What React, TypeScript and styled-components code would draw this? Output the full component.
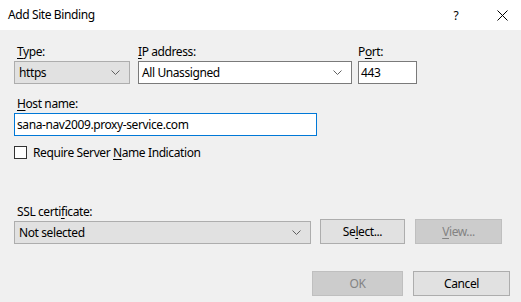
import React from 'react';
import styled, { createGlobalStyle } from 'styled-components';

const GlobalStyle = createGlobalStyle`
  html, body {
    margin: 0;
    padding: 0;
    background: #f0f0f0;
  }
  body {
    font-family: "Noto Sans", "Open Sans", sans-serif;
    font-size: 12px;
    letter-spacing: -0.4px;
    color: #000;
  }
`;

const Window = styled.div`
  width: 521px;
  height: 302px;
  display: flex;
  flex-direction: column;
  background: #f0f0f0;
  overflow: hidden;
`;

const TitleBar = styled.div`
  height: 30px;
  flex: none;
  display: flex;
  align-items: center;
  background: #fff;
  padding-left: 8px;
`;

const Title = styled.div`
  flex: 1;
  font-size: 12px;
  margin-top: -1px;
`;

const CaptionButton = styled.div<{ $w: number; $pl?: number }>`
  box-sizing: border-box;
  width: ${(p) => p.$w}px;
  height: 30px;
  display: flex;
  align-items: center;
  justify-content: center;
  padding-left: ${(p) => p.$pl ?? 0}px;
  font-size: 12px;
`;

const Body = styled.div`
  flex: 1;
  display: flex;
  flex-direction: column;
  padding: 14px 0 0 14px;
`;

const Row = styled.div<{ $gap?: number; $mt?: number }>`
  display: flex;
  align-items: flex-end;
  gap: ${(p) => p.$gap ?? 8}px;
  margin-top: ${(p) => p.$mt ?? 0}px;
`;

const Field = styled.div<{ $w: number }>`
  width: ${(p) => p.$w}px;
  display: flex;
  flex-direction: column;
`;

const Label = styled.label<{ $pad?: number }>`
  display: block;
  line-height: 16px;
  padding-left: ${(p) => p.$pad ?? 3}px;
  margin-bottom: 1px;
  white-space: nowrap;
`;

const Key = styled.span`
  text-decoration: underline;
  text-underline-offset: 2px;
`;

const Combo = styled.div<{ $editable?: boolean }>`
  box-sizing: border-box;
  height: 23px;
  display: flex;
  align-items: center;
  padding: 0 9px 0 ${(p) => (p.$editable ? 3 : 4)}px;
  background: ${(p) => (p.$editable ? '#fff' : '#e1e1e1')};
  border: 1px solid ${(p) => (p.$editable ? '#7a7a7a' : '#adadad')};
  white-space: nowrap;
`;

const ComboText = styled.span`
  flex: 1;
`;

const TextBox = styled.div<{ $focused?: boolean }>`
  box-sizing: border-box;
  height: 23px;
  display: flex;
  align-items: center;
  padding: 0 2px;
  background: #fff;
  border: 1px solid ${(p) => (p.$focused ? '#0078d7' : '#7a7a7a')};
  white-space: nowrap;
`;

const CheckRow = styled.div`
  display: flex;
  align-items: center;
  gap: 6px;
  margin-top: 8px;
`;

const CheckBox = styled.div`
  box-sizing: border-box;
  width: 13px;
  height: 13px;
  background: #fff;
  border: 1px solid #333;
`;

const Button = styled.div<{ $w: number; $disabled?: boolean }>`
  box-sizing: border-box;
  width: ${(p) => p.$w}px;
  height: 25px;
  display: flex;
  align-items: center;
  justify-content: center;
  background: ${(p) => (p.$disabled ? '#cccccc' : '#e1e1e1')};
  border: 1px solid ${(p) => (p.$disabled ? '#bfbfbf' : '#adadad')};
  color: ${(p) => (p.$disabled ? '#838383' : '#000')};
`;

const Footer = styled.div`
  display: flex;
  justify-content: flex-end;
  gap: 10px;
  margin-top: 27px;
  padding-right: 11px;
`;

const Chevron = () => (
  <svg width="9" height="5" viewBox="0 0 9 5" fill="none">
    <path d="M0.5 0.5 L4.5 4.5 L8.5 0.5" stroke="#606060" strokeWidth="1" />
  </svg>
);

const CloseIcon = () => (
  <svg width="11" height="11" viewBox="0 0 11 11" fill="none">
    <path d="M0.5 0.5 L10.5 10.5 M10.5 0.5 L0.5 10.5" stroke="#000" strokeWidth="1" />
  </svg>
);

export default function App() {
  return (
    <Window>
      <GlobalStyle />
      <TitleBar>
        <Title>Add Site Binding</Title>
        <CaptionButton $w={46}>?</CaptionButton>
        <CaptionButton $w={42} $pl={4}>
          <CloseIcon />
        </CaptionButton>
      </TitleBar>
      <Body>
        <Row>
          <Field $w={116}>
            <Label>
              <Key>T</Key>ype:
            </Label>
            <Combo>
              <ComboText>https</ComboText>
              <Chevron />
            </Combo>
          </Field>
          <Field $w={214}>
            <Label $pad={0}>
              <Key>I</Key>P address:
            </Label>
            <Combo $editable>
              <ComboText>All Unassigned</ComboText>
              <Chevron />
            </Combo>
          </Field>
          <Field $w={59} style={{ marginLeft: -2 }}>
            <Label $pad={0}>
              P<Key>o</Key>rt:
            </Label>
            <TextBox>443</TextBox>
          </Field>
        </Row>

        <Row $mt={12}>
          <Field $w={303}>
            <Label>
              <Key>H</Key>ost name:
            </Label>
            <TextBox $focused>sana-nav2009.proxy-service.com</TextBox>
          </Field>
        </Row>

        <CheckRow>
          <CheckBox />
          <span>
            Require Server <Key>N</Key>ame Indication
          </span>
        </CheckRow>

        <Row $mt={43} $gap={9}>
          <Field $w={297}>
            <Label>
              SSL certi<Key>f</Key>icate:
            </Label>
            <Combo>
              <ComboText>Not selected</ComboText>
              <Chevron />
            </Combo>
          </Field>
          <Button $w={85}>
            Se<Key>l</Key>ect...
          </Button>
          <Button $w={87} $disabled style={{ marginLeft: 1 }}>
            <Key>V</Key>iew...
          </Button>
        </Row>

        <Footer>
          <Button $w={91} $disabled>
            OK
          </Button>
          <Button $w={97}>Cancel</Button>
        </Footer>
      </Body>
    </Window>
  );
}
